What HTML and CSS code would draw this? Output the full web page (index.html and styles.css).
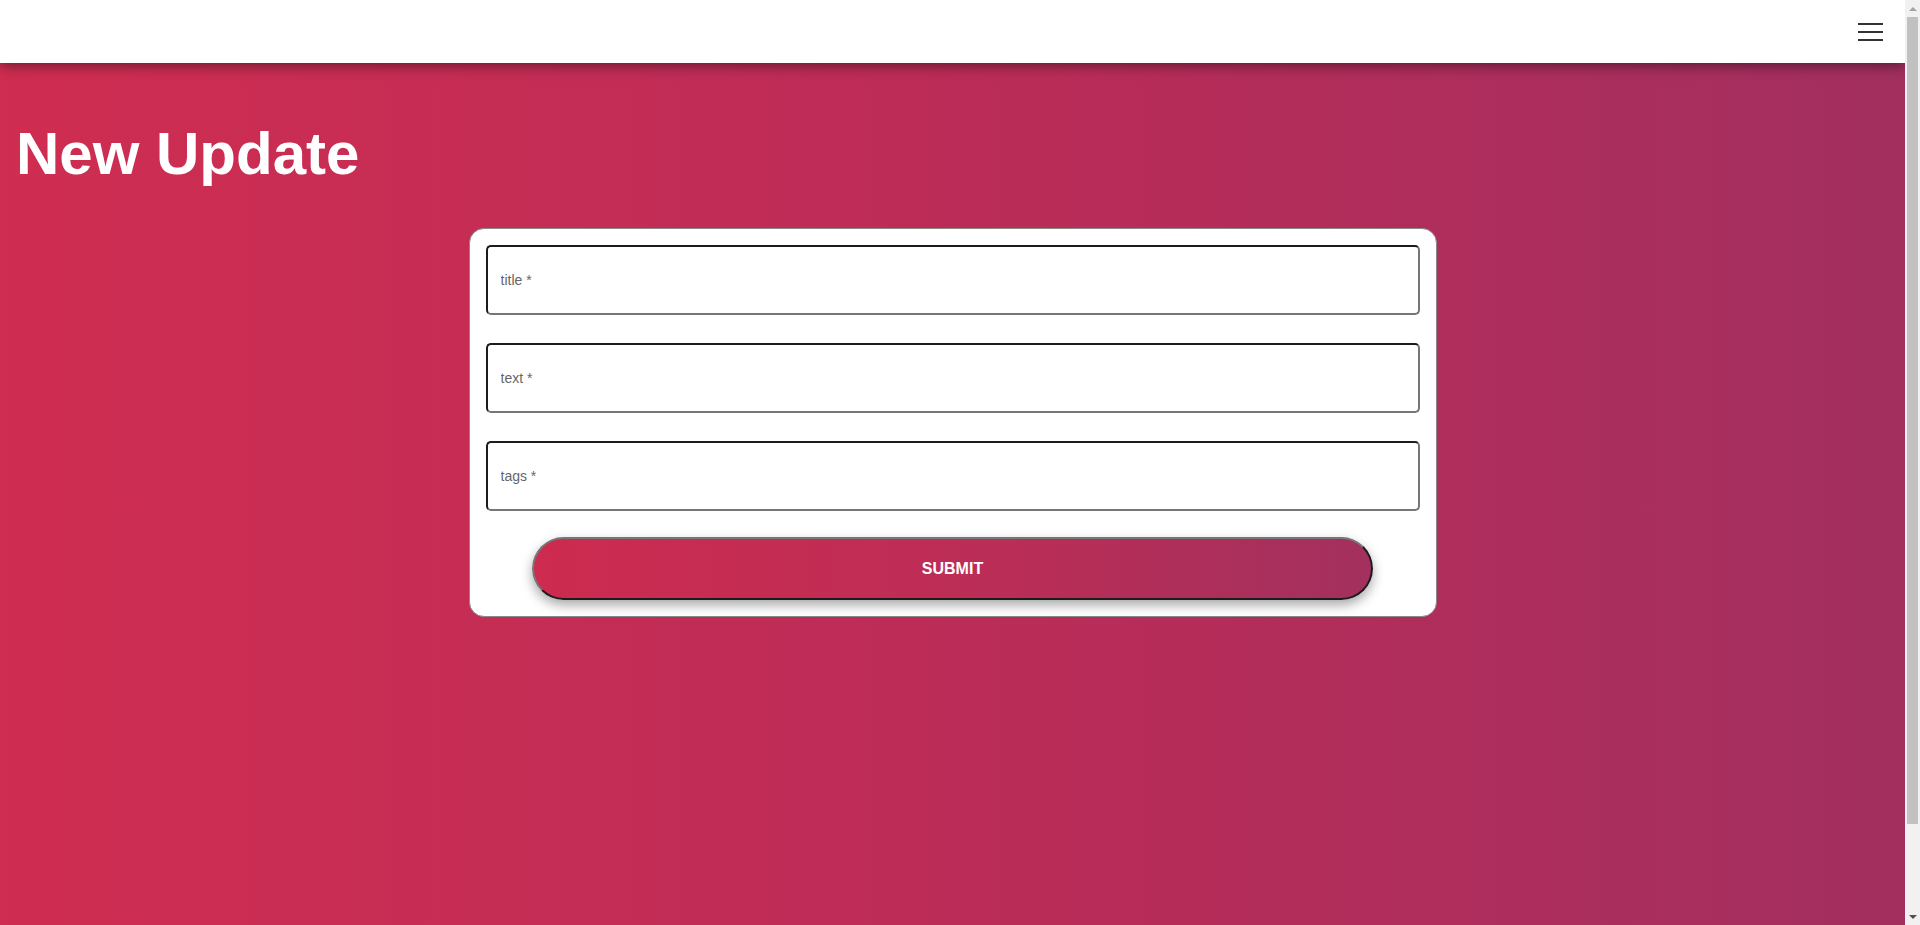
FILE: index.html
```html
<!DOCTYPE html>
<html lang="en">
<head>
<meta charset="utf-8">
<title>New Update</title>
<link rel="stylesheet" href="styles.css">
</head>
<body>
<div class="viewport">
  <header class="topbar">
    <button class="menu-btn" aria-label="menu">
      <span class="bar"></span>
      <span class="bar"></span>
      <span class="bar"></span>
    </button>
  </header>
  <main class="page">
    <h1 class="page-title">New Update</h1>
    <form class="card">
      <input class="field" type="text" placeholder="title *">
      <input class="field" type="text" placeholder="text *">
      <input class="field" type="text" placeholder="tags *">
      <button class="submit" type="button">SUBMIT</button>
    </form>
  </main>
</div>
<div class="scrollbar" aria-hidden="true">
  <div class="sb-btn"><span class="arrow-up"></span></div>
  <div class="sb-track"><div class="sb-thumb"></div></div>
  <div class="sb-btn"><span class="arrow-down"></span></div>
</div>
</body>
</html>
```

FILE: styles.css
```css
html, body {
  margin: 0;
  padding: 0;
  height: 100%;
  overflow: hidden;
}
body {
  font-family: "Liberation Sans", Arial, sans-serif;
  display: flex;
}
.viewport {
  flex: 1;
  min-width: 0;
  height: 100vh;
  overflow: hidden;
  background: linear-gradient(to right, #cf2d51 0%, #bc2c58 50%, #a22f5f 100%);
}
.scrollbar {
  width: 15px;
  flex: none;
  height: 100vh;
  background: #f1f1f1;
  display: flex;
  flex-direction: column;
}
.sb-btn {
  height: 17px;
  flex: none;
  display: flex;
  align-items: center;
  justify-content: center;
}
.arrow-up {
  width: 0;
  height: 0;
  border-left: 4px solid transparent;
  border-right: 4px solid transparent;
  border-bottom: 4px solid #a3a3a3;
}
.arrow-down {
  width: 0;
  height: 0;
  border-left: 4px solid transparent;
  border-right: 4px solid transparent;
  border-top: 4px solid #505050;
}
.sb-track {
  flex: 1;
  padding: 0 2px;
}
.sb-thumb {
  height: 807px;
  background: #c1c1c1;
}
.topbar {
  position: relative;
  z-index: 2;
  height: 63px;
  background: #fff;
  display: flex;
  justify-content: flex-end;
  align-items: center;
  padding-right: 22px;
  box-shadow: 0 3px 12px rgba(0, 0, 0, 0.45);
}
.menu-btn {
  width: 25px;
  height: 18px;
  padding: 0;
  border: none;
  background: transparent;
  display: flex;
  flex-direction: column;
  justify-content: space-between;
  margin-top: 1px;
}
.bar {
  display: block;
  width: 25px;
  height: 2px;
  background: #333;
}
.page {
  padding: 16px;
}
.page-title {
  margin: 40px 0;
  font-size: 60px;
  font-weight: bold;
  color: #fff;
  line-height: normal;
}
.card {
  width: 968px;
  margin: 0 auto;
  box-sizing: border-box;
  background: #fff;
  border: 1px solid #8a8a8a;
  border-radius: 15px;
  padding: 16px;
  display: flex;
  flex-direction: column;
  align-items: center;
}
.field {
  width: 100%;
  height: 70px;
  box-sizing: border-box;
  margin: 0 0 28px;
  padding: 0 13px;
  border-style: solid;
  border-width: 2px;
  border-color: #1c1c1c #767676 #767676 #1c1c1c;
  border-radius: 5px;
  font-family: "Liberation Sans", Arial, sans-serif;
  font-size: 14px;
  color: #333;
  background: #fff;
  outline: none;
}
.field:last-of-type {
  margin-bottom: 26px;
}
.field::placeholder {
  color: #666;
}
.submit {
  width: 90%;
  height: 63px;
  box-sizing: border-box;
  border-style: solid;
  border-width: 2px;
  border-color: #767676 #1c1c1c #1c1c1c #767676;
  border-radius: 32px;
  background: linear-gradient(to right, #cd2b4f 0%, #bd2d56 50%, #a3305e 100%);
  color: #fff;
  font-family: "Liberation Sans", Arial, sans-serif;
  font-size: 16px;
  font-weight: bold;
  box-shadow: 0 5px 12px rgba(0, 0, 0, 0.35);
  cursor: pointer;
}
```
